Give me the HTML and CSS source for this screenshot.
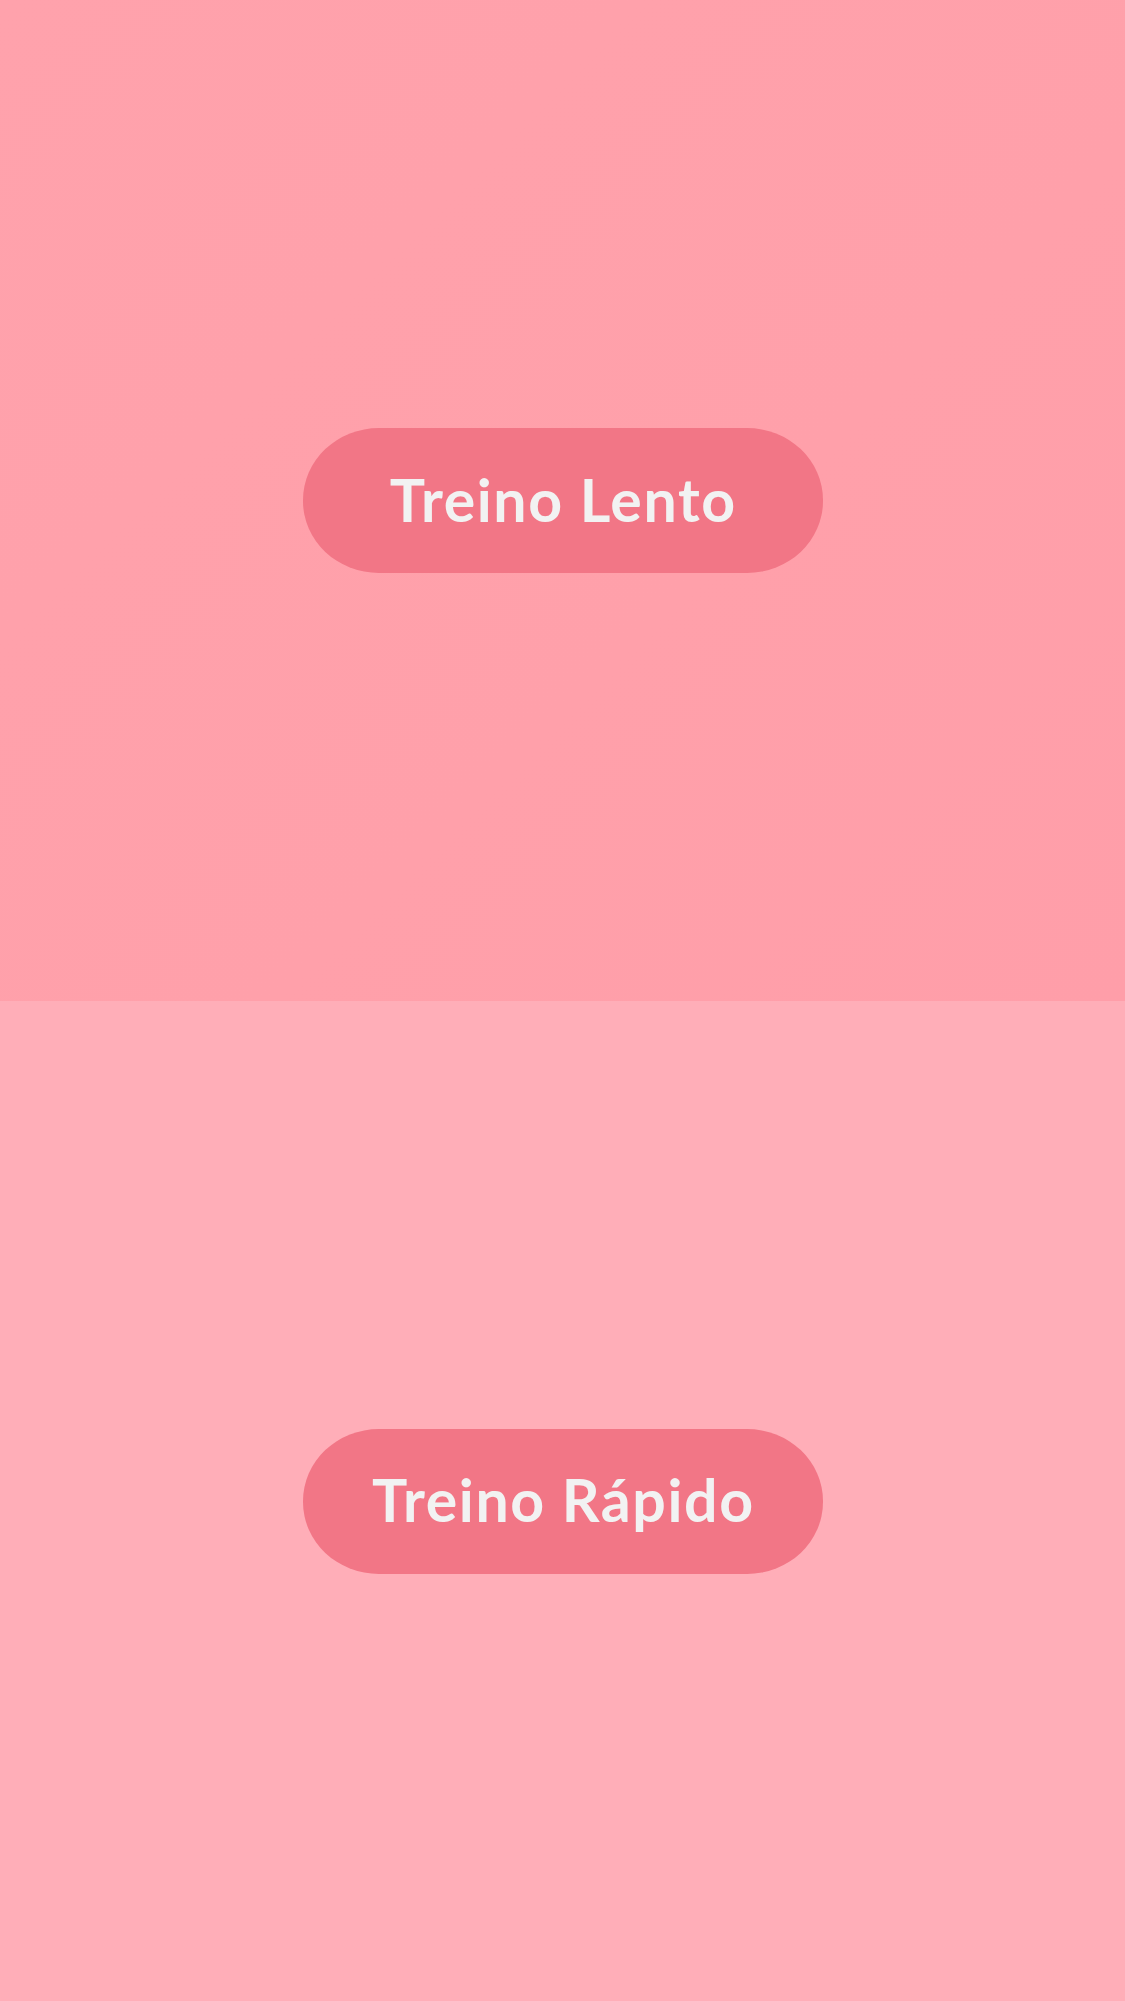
FILE: index.html
```html
<!DOCTYPE html>
<html lang="pt">
<head>
<meta charset="utf-8">
<title>Treino</title>
<link rel="stylesheet" href="styles.css">
</head>
<body>
<main class="screen">
  <section class="panel panel-slow">
    <button class="pill">Treino Lento</button>
  </section>
  <section class="panel panel-fast">
    <button class="pill">Treino Rápido</button>
  </section>
</main>
</body>
</html>
```
FILE: styles.css
```css
html, body {
  margin: 0;
  padding: 0;
}
body {
  width: 1125px;
  height: 2001px;
  overflow: hidden;
  font-family: "Lato", "Noto Sans", sans-serif;
}
.screen {
  display: flex;
  flex-direction: column;
  height: 2001px;
}
.panel {
  display: flex;
  align-items: center;
  justify-content: center;
}
.panel-slow {
  height: 1001px;
  background: linear-gradient(135deg, #ffa2ac 0%, #ffa0aa 60%, #ff9ea9 100%);
}
.panel-fast {
  height: 1000px;
  background: #ffaeb8;
}
.pill {
  width: 520px;
  height: 145px;
  border: none;
  border-radius: 76px / 72px;
  background: #f27686;
  color: #f2f2f2;
  font-family: "Lato", "Noto Sans", sans-serif;
  font-weight: 700;
  font-size: 59px;
  letter-spacing: 1.6px;
  padding: 0 0 3px 1.6px;
  cursor: pointer;
}
```
